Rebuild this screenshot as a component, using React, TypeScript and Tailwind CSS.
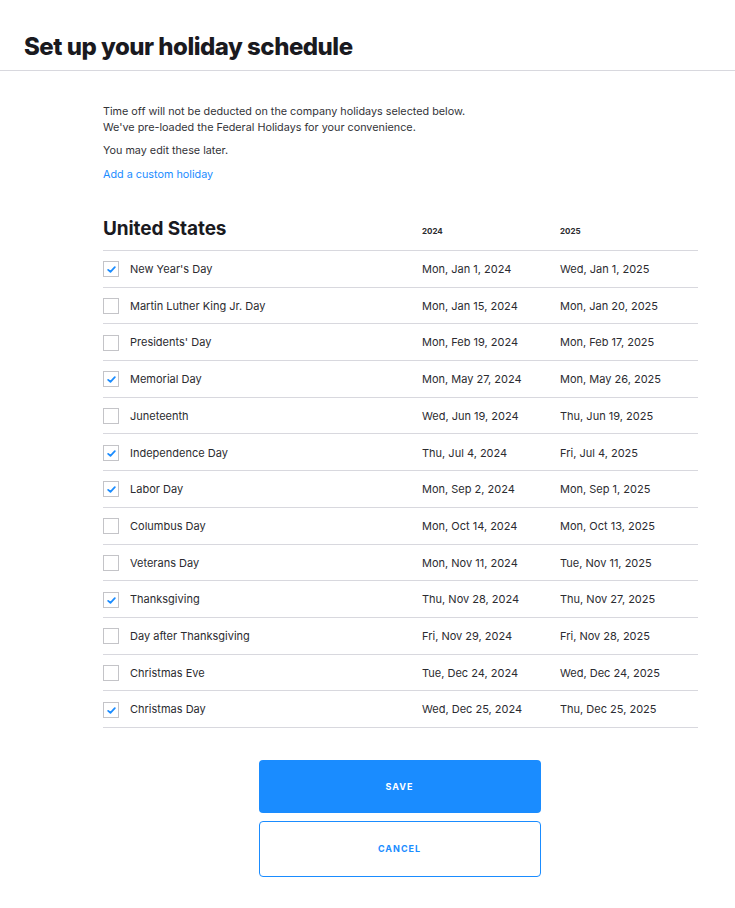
import React from 'react';

type Holiday = { name: string; d24: string; d25: string; on: boolean };

const holidays: Holiday[] = [
  { name: "New Year's Day", d24: 'Mon, Jan 1, 2024', d25: 'Wed, Jan 1, 2025', on: true },
  { name: 'Martin Luther King Jr. Day', d24: 'Mon, Jan 15, 2024', d25: 'Mon, Jan 20, 2025', on: false },
  { name: "Presidents' Day", d24: 'Mon, Feb 19, 2024', d25: 'Mon, Feb 17, 2025', on: false },
  { name: 'Memorial Day', d24: 'Mon, May 27, 2024', d25: 'Mon, May 26, 2025', on: true },
  { name: 'Juneteenth', d24: 'Wed, Jun 19, 2024', d25: 'Thu, Jun 19, 2025', on: false },
  { name: 'Independence Day', d24: 'Thu, Jul 4, 2024', d25: 'Fri, Jul 4, 2025', on: true },
  { name: 'Labor Day', d24: 'Mon, Sep 2, 2024', d25: 'Mon, Sep 1, 2025', on: true },
  { name: 'Columbus Day', d24: 'Mon, Oct 14, 2024', d25: 'Mon, Oct 13, 2025', on: false },
  { name: 'Veterans Day', d24: 'Mon, Nov 11, 2024', d25: 'Tue, Nov 11, 2025', on: false },
  { name: 'Thanksgiving', d24: 'Thu, Nov 28, 2024', d25: 'Thu, Nov 27, 2025', on: true },
  { name: 'Day after Thanksgiving', d24: 'Fri, Nov 29, 2024', d25: 'Fri, Nov 28, 2025', on: false },
  { name: 'Christmas Eve', d24: 'Tue, Dec 24, 2024', d25: 'Wed, Dec 24, 2025', on: false },
  { name: 'Christmas Day', d24: 'Wed, Dec 25, 2024', d25: 'Thu, Dec 25, 2025', on: true },
];

const Check: React.FC<{ on: boolean }> = ({ on }) => (
  <div className="w-[16px] h-[16px] border border-[#c4c4c8] bg-white flex items-center justify-center shrink-0">
    {on && (
      <svg width="9" height="7" viewBox="0 0 10 8" className="mt-[1px]">
        <path d="M1.2 4.4 L3.8 6.6 L8.8 1.4" fill="none" stroke="#1a8cff" strokeWidth="2" strokeLinecap="round" strokeLinejoin="round" />
      </svg>
    )}
  </div>
);

const App: React.FC = () => {
  return (
    <div className="min-h-screen bg-white text-[#2b2b30] font-['Inter',sans-serif]">
      <header className="px-6 pt-[33px] pb-[10px] border-b border-[#d8d8de]">
        <h1 className="text-[24px] font-extrabold tracking-[-0.5px] text-[#1a1a1f] leading-[27px]">
          Set up your holiday schedule
        </h1>
      </header>

      <main className="pl-[103px] pr-[37px] pt-[33px]">
        <p className="text-[10.8px] leading-[16px] text-[#333338]">
          Time off will not be deducted on the company holidays selected below.
          <br />
          We've pre-loaded the Federal Holidays for your convenience.
        </p>
        <p className="text-[10.8px] leading-[16px] mt-[7px] text-[#333338]">You may edit these later.</p>
        <a className="block text-[10.8px] leading-[16px] mt-[8px] text-[#1a8cff]">Add a custom holiday</a>

        <div className="mt-[35px] grid grid-cols-[319px_138px_1fr] items-end pb-[10px] border-b border-[#d8d8de]">
          <div className="text-[19px] font-bold tracking-[-0.1px] text-[#1a1a1f] leading-[22px]">United States</div>
          <div className="text-[8px] font-bold pb-[3px]">2024</div>
          <div className="text-[8px] font-bold pb-[3px]">2025</div>
        </div>

        {holidays.map((h) => (
          <div
            key={h.name}
            className="grid grid-cols-[319px_138px_1fr] items-center h-[36.7px] pt-[1px] border-b border-[#d8d8de] text-[11px]"
          >
            <div className="flex items-center gap-[11px]">
              <Check on={h.on} />
              <span>{h.name}</span>
            </div>
            <div>{h.d24}</div>
            <div>{h.d25}</div>
          </div>
        ))}

        <div className="flex flex-col items-center gap-[8px] mt-[32px] -ml-[2px]">
          <button className="w-[282px] h-[53px] rounded-[4px] bg-[#1a8cff] text-white text-[9px] font-bold tracking-[1px]">
            SAVE
          </button>
          <button className="w-[282px] h-[56px] rounded-[4px] border border-[#1a8cff] bg-white text-[#1a8cff] text-[9px] font-bold tracking-[1px]">
            CANCEL
          </button>
        </div>
      </main>
    </div>
  );
};

export default App;
